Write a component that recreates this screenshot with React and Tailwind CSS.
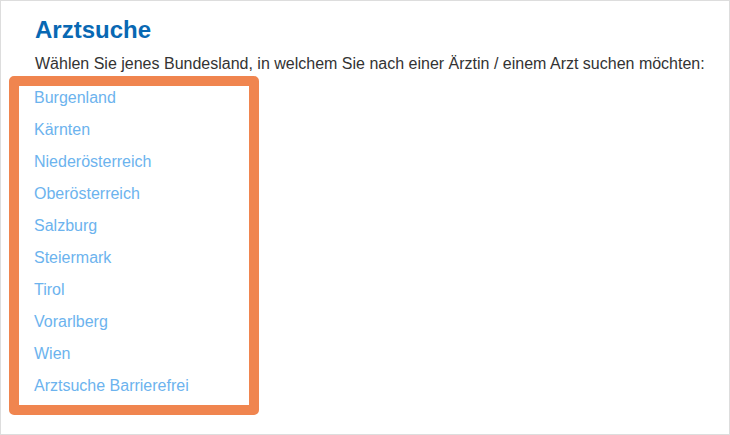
export default function App() {
  const items = [
    "Burgenland",
    "Kärnten",
    "Niederösterreich",
    "Oberösterreich",
    "Salzburg",
    "Steiermark",
    "Tirol",
    "Vorarlberg",
    "Wien",
    "Arztsuche Barrierefrei",
  ];
  return (
    <div className="w-[730px] h-[435px] border border-[#dddddd] bg-white font-['Liberation_Sans',Arial,sans-serif] box-border">
      <h1 className="mt-[15px] ml-[34px] text-[24px] leading-[28px] font-bold text-[#0868b3]">
        Arztsuche
      </h1>
      <p className="mt-[10px] ml-[34px] text-[16px] leading-[20px] text-[#333333]">
        Wählen Sie jenes Bundesland, in welchem Sie nach einer Ärztin / einem Arzt suchen möchten:
      </p>
      <ul className="mt-[2px] ml-[8px] w-[250px] h-[339px] border-[10px] border-[#f0854f] rounded-[5px] pt-[2px] pb-[9px] pl-[15px] flex flex-col gap-3 box-border">
        {items.map((t) => (
          <li key={t} className="text-[16px] leading-[20px] text-[#6cb3ee]">
            <a href="#">{t}</a>
          </li>
        ))}
      </ul>
    </div>
  );
}
